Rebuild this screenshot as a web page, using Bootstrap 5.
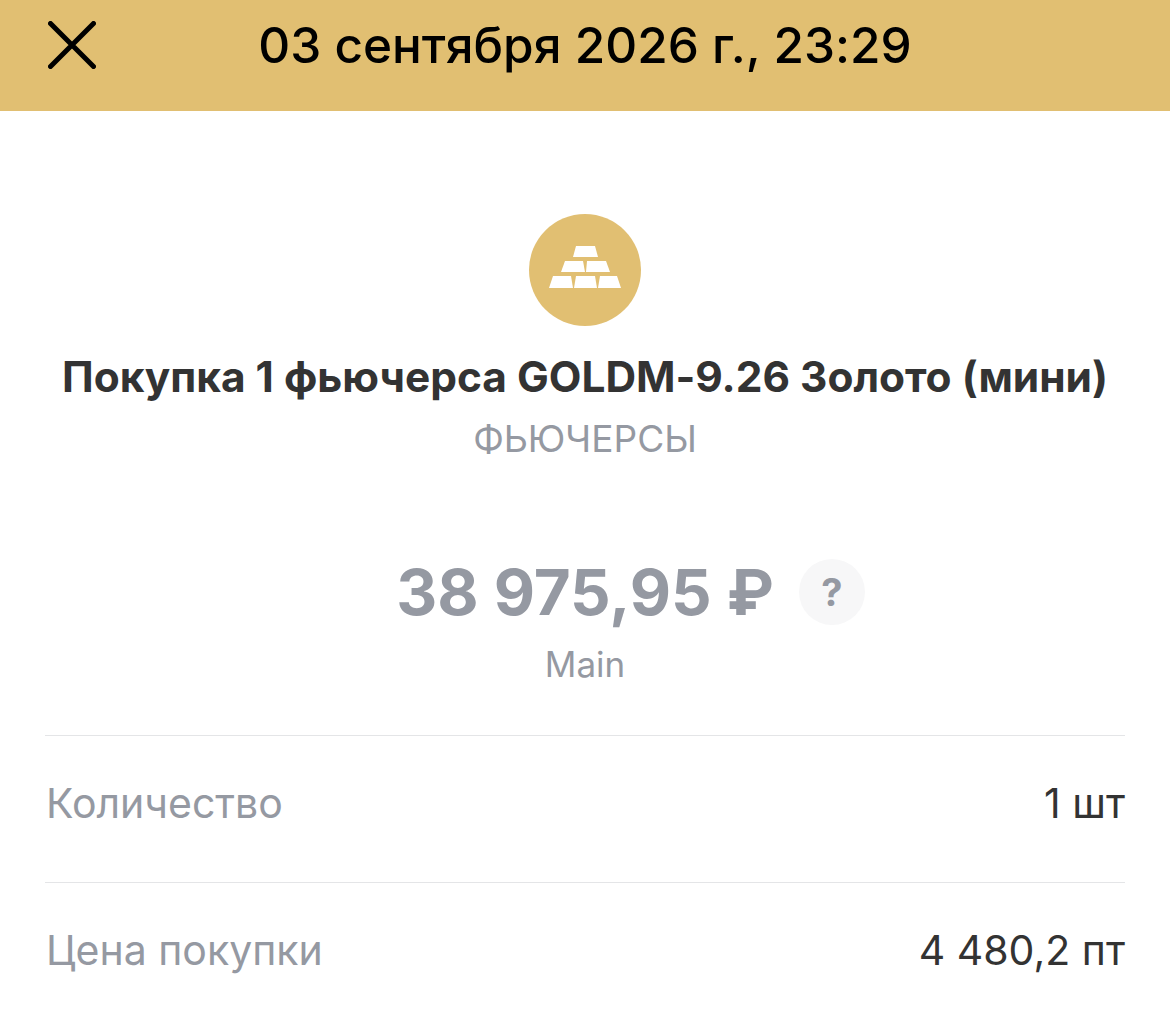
<!DOCTYPE html>
<html lang="ru">
<head>
  <meta charset="UTF-8">
  <meta name="viewport" content="width=device-width, initial-scale=1.0">
  <title>Операция</title>
  <link href="https://cdn.jsdelivr.net/npm/bootstrap@5.3.6/dist/css/bootstrap.min.css" rel="stylesheet">
  <style>
    html, body { height: 1026px; overflow: hidden; }
    body { background: #fff; font-family: Inter, "Liberation Sans", sans-serif; font-feature-settings: "calt" 0; color: #333; }
    .top-bar { height: 111px; background: #e1bf72; padding-left: 48px; padding-bottom: 22px; }
    .close-icon { width: 48px; height: 48px; flex: none; display: block; }
    .top-date { font-size: 49.500px; line-height: 1; color: #000; flex: 1; padding-right: 96px; padding-top: 2px; font-weight: 500; }
    .op-icon { width: 112px; height: 112px; margin-top: 103px; background: #e1bf72; }
    .bars-icon { margin-bottom: 6px; }
    .op-title { font-size: 42.400px; line-height: 48px; font-weight: 700; color: #333; margin-top: 27px; white-space: nowrap; }
    .op-type { font-size: 37px; line-height: 40px; color: #9599a2; margin-top: 18px; }
    .amount-row { margin-top: 97px; height: 72px; }
    .amount { font-size: 63.600px; line-height: 72px; font-weight: 700; color: #9599a2; }
    .help-dot { width: 66px; height: 66px; background: #f7f7f8; color: #9599a2; font-size: 38px; font-weight: 700; right: -91px; top: 3px; }
    .amount-wrap { position: relative; }
    .account { font-size: 35px; line-height: 40px; color: #9599a2; margin-top: 16px; }
    .info-list { margin: 51px 45px 0; }
    .info-row { height: 147px; border-top: 1px solid #e4e5e7; padding-bottom: 10px; font-size: 41px; }
    .info-label { color: #9599a2; padding-left: 1px; }
    .info-value { color: #333; }
  </style>
</head>
<body>
  <div class="top-bar d-flex align-items-center">
    <svg class="close-icon" viewBox="0 0 48 48" fill="none" stroke="#000" stroke-width="5" stroke-linecap="round">
      <path d="M2.5 2.5L45.500 45.500M45.500 2.500L2.500 45.500"/>
    </svg>
    <div class="top-date text-center">03 сентября 2026 г., 23:29</div>
  </div>

  <div class="d-flex flex-column align-items-center">
    <div class="op-icon rounded-circle d-flex align-items-center justify-content-center">
      <svg class="bars-icon" width="72" height="42" viewBox="0 0 72 42" fill="#fff">
        <path d="M27 0H46L49 11H24Z"/>
        <path d="M16 15H34L36 26H12Z"/>
        <path d="M38 15H57L61 26H37Z"/>
        <path d="M4 30H22L24 42H0Z"/>
        <path d="M27 30H46L48 42H25Z"/>
        <path d="M51 30H68L72 42H49Z"/>
      </svg>
    </div>
    <div class="op-title">Покупка 1 фьючерса GOLDM-9.26 Золото (мини)</div>
    <div class="op-type">ФЬЮЧЕРСЫ</div>
    <div class="amount-row d-flex justify-content-center">
      <div class="amount-wrap">
        <div class="amount">38 975,95 ₽</div>
        <div class="help-dot rounded-circle d-flex align-items-center justify-content-center position-absolute">?</div>
      </div>
    </div>
    <div class="account">Main</div>
  </div>

  <div class="info-list">
    <div class="info-row d-flex justify-content-between align-items-center">
      <span class="info-label">Количество</span>
      <span class="info-value">1 шт</span>
    </div>
    <div class="info-row d-flex justify-content-between align-items-center">
      <span class="info-label">Цена покупки</span>
      <span class="info-value">4 480,2 пт</span>
    </div>
  </div>
</body>
</html>
